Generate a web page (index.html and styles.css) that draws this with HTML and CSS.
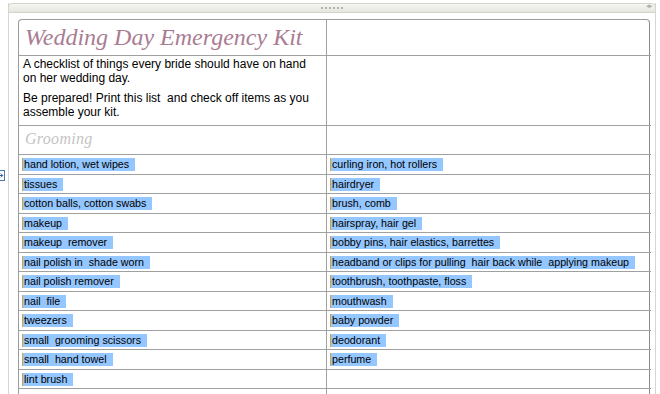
FILE: index.html
```html
<!DOCTYPE html>
<html>
<head>
<meta charset="utf-8">
<link rel="stylesheet" href="styles.css">
</head>
<body>
<div class="frame">
  <div class="topbar">
    <span class="grip"><i></i><i></i><i></i><i></i><i></i><i></i></span>
    <span class="arrows">◂▸</span>
  </div>
  <div class="page">
    <span class="handle"><svg width="8" height="11" viewBox="0 0 8 11"><rect x="0.5" y="0.5" width="7" height="10" fill="#fff" stroke="#4a78b8"/><path d="M1 5.5h4.5M3.8 3.6l1.9 1.9-1.9 1.9" fill="none" stroke="#2a5aa0" stroke-width="1"/></svg></span>
    <div class="tbl">
      <div class="cell title">Wedding Day Emergency Kit</div>
      <div class="cell r"></div>
      <div class="cell desc">
        <p>A checklist of things every bride should have on hand on her wedding day.</p>
        <p>Be prepared! Print this list&nbsp; and check off items as you assemble your kit.</p>
      </div>
      <div class="cell r"></div>
      <div class="cell sect">Grooming</div>
      <div class="cell r"></div>

      <div class="cell item"><span>hand lotion, wet wipes</span></div>
      <div class="cell item r"><span>curling iron, hot rollers</span></div>
      <div class="cell item"><span>tissues</span></div>
      <div class="cell item r"><span>hairdryer</span></div>
      <div class="cell item"><span>cotton balls, cotton swabs</span></div>
      <div class="cell item r"><span>brush, comb</span></div>
      <div class="cell item"><span>makeup</span></div>
      <div class="cell item r"><span>hairspray, hair gel</span></div>
      <div class="cell item"><span>makeup&nbsp; remover</span></div>
      <div class="cell item r"><span>bobby pins, hair elastics, barrettes</span></div>
      <div class="cell item"><span>nail polish in&nbsp; shade worn</span></div>
      <div class="cell item r"><span>headband or clips for pulling&nbsp; hair back while&nbsp; applying makeup</span></div>
      <div class="cell item"><span>nail polish remover</span></div>
      <div class="cell item r"><span>toothbrush, toothpaste, floss</span></div>
      <div class="cell item"><span>nail&nbsp; file</span></div>
      <div class="cell item r"><span>mouthwash</span></div>
      <div class="cell item"><span>tweezers</span></div>
      <div class="cell item r"><span>baby powder</span></div>
      <div class="cell item"><span>small&nbsp; grooming scissors</span></div>
      <div class="cell item r"><span>deodorant</span></div>
      <div class="cell item"><span>small&nbsp; hand towel</span></div>
      <div class="cell item r"><span>perfume</span></div>
      <div class="cell item"><span>lint brush</span></div>
      <div class="cell item r"></div>
      <div class="cell item"></div>
      <div class="cell item r"></div>
    </div>
  </div>
</div>
</body>
</html>
```

FILE: styles.css
```css
html, body {
  margin: 0;
  padding: 0;
  background: #ffffff;
  overflow: hidden;
}
body {
  font-family: "Liberation Sans", Arial, sans-serif;
  color: #000;
  height: 394px;
}
.frame {
  margin: 3px 0 0 8px;
  width: 646px;
  height: 391px;
  border-left: 1px solid #d6d6d2;
  border-right: 1px solid #d6d6d2;
}
.topbar {
  height: 8px;
  margin: 0 -1px;
  border: 1px solid #d4d4cc;
  border-radius: 4px 4px 0 0;
  background: linear-gradient(#f7f7f3, #e6e6df);
  display: flex;
  align-items: center;
  justify-content: center;
  position: relative;
}
.grip {
  display: flex;
  gap: 2px;
}
.grip i {
  width: 2px;
  height: 2px;
  background: #b4b4ac;
}
.arrows {
  position: absolute;
  right: 3px;
  top: -2px;
  font-size: 7px;
  color: #b0b0a8;
  letter-spacing: -1px;
}
.page {
  padding: 6px 0 0 9px;
  position: relative;
}
.handle {
  position: absolute;
  left: -12px;
  top: 157px;
  line-height: 0;
}
.tbl {
  display: grid;
  grid-template-columns: 308px 324px;
  grid-template-rows: 36px 70px 29px repeat(13, 19.5px);
  border: 1px solid #9c9c9c;
  border-right-color: #8c8c8c;
  border-radius: 4px 4px 0 0;
  width: 632px;
  box-sizing: border-box;
}
.cell {
  border-bottom: 1px solid #a0a0a0;
  border-right: 1px solid #a0a0a0;
  padding: 0 4px;
  box-sizing: border-box;
  overflow: hidden;
  white-space: nowrap;
}
.cell.r {
  border-right: none;
}
.title {
  font-family: "Liberation Serif", "Times New Roman", serif;
  font-style: italic;
  font-size: 24px;
  line-height: 35px;
  color: #a97c93;
  padding-left: 6px;
}
.desc {
  font-size: 12px;
  line-height: 14px;
  white-space: normal;
  padding-top: 1px;
  padding-right: 13px;
}
.desc p {
  margin: 0 0 6px 0;
}
.sect {
  font-family: "Liberation Serif", "Times New Roman", serif;
  font-style: italic;
  font-size: 16px;
  line-height: 26px;
  color: #c4c4c4;
  padding-left: 6px;
  letter-spacing: 0.3px;
}
.item {
  font-size: 10.7px;
  line-height: 13px;
  padding-top: 3px;
}
.item span {
  display: inline-block;
  background: #94c6ff;
  padding: 0 6px 0 1px;
  border-left: 1px solid #e0a030;
  margin-left: -1px;
}
```
